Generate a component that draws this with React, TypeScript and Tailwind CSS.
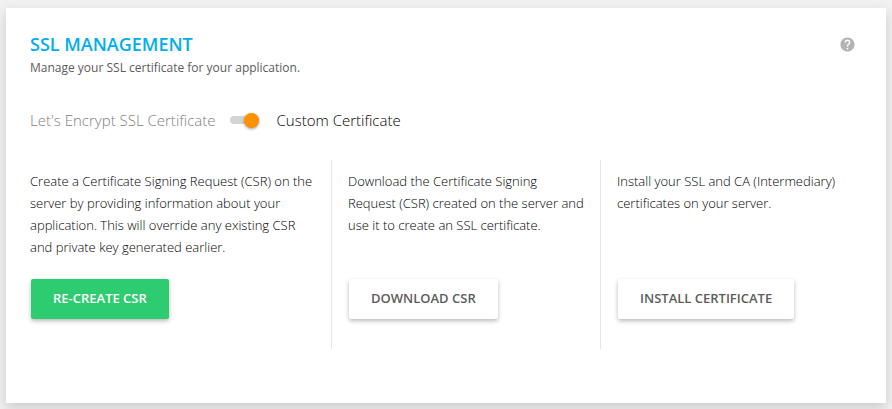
import React, { useState } from "react";
import { MdHelp } from "react-icons/md";
import clsx from "clsx";

type ActionColumnProps = {
    description: string;
    action: string;
    primary?: boolean;
    className?: string;
};

const ActionColumn = ({
    description,
    action,
    primary = false,
    className,
}: ActionColumnProps) => (
    <div className={clsx("flex flex-col items-start pt-2.5 pb-7.5", className)}>
        <p className="grow min-h-[109px] text-[13px] leading-[22px] font-light text-black">
            {description}
        </p>
        <button
            type="button"
            className={clsx(
                "ml-px h-10 px-[22px] rounded-xs text-[13px] font-semibold whitespace-nowrap shadow-[0_2px_4px_rgba(0,0,0,0.28)]",
                primary ? "bg-[#2ecc71] text-white" : "bg-white text-[#5c5c5c]"
            )}
        >
            {action}
        </button>
    </div>
);

const App = () => {
    const [isCustom, setIsCustom] = useState(true);

    return (
        <div className="min-h-screen bg-[#f1f1f1] px-1.5 pt-2 pb-1.5 font-['Open_Sans',sans-serif]">
            <main className="bg-white px-6 pt-6 pb-[54px] shadow-[0_5px_12px_rgba(0,0,0,0.16)]">
                <header className="flex justify-between items-start">
                    <div>
                        <h1 className="text-lg leading-6 font-semibold text-[#00aeef]">
                            SSL MANAGEMENT
                        </h1>
                        <p className="text-xs leading-6 text-[#5c5c5c]">
                            Manage your SSL certificate for your application.
                        </p>
                    </div>
                    <button
                        type="button"
                        aria-label="Help"
                        className="mt-1 mr-1.5 text-[#b3b3b3]"
                    >
                        <MdHelp size={17} />
                    </button>
                </header>

                <div className="mt-7 flex items-center text-[15px] leading-6 font-light">
                    <span className="text-[#808080]">
                        Let's Encrypt SSL Certificate
                    </span>
                    <input
                        id="custom-certificate"
                        type="checkbox"
                        role="switch"
                        checked={isCustom}
                        onChange={(e) => setIsCustom(e.target.checked)}
                        className="ml-3.5 mr-[18px] flex h-2 w-[29px] appearance-none items-center rounded-full bg-[#d4d4d4] before:size-[15px] before:shrink-0 before:rounded-full before:bg-[#ff9100] before:shadow-[0_1px_3px_rgba(0,0,0,0.4)] checked:justify-end"
                    />
                    <label htmlFor="custom-certificate" className="text-black">
                        Custom Certificate
                    </label>
                </div>

                <div className="mt-7 grid grid-cols-[302fr_269fr_261fr]">
                    <ActionColumn
                        primary
                        description="Create a Certificate Signing Request (CSR) on the server by providing information about your application. This will override any existing CSR and private key generated earlier."
                        action="RE-CREATE CSR"
                        className="border-r border-[#e6e6e6] pr-3.5"
                    />
                    <ActionColumn
                        description="Download the Certificate Signing Request (CSR) created on the server and use it to create an SSL certificate."
                        action="DOWNLOAD CSR"
                        className="border-r border-[#e6e6e6] pl-4 pr-3.5"
                    />
                    <ActionColumn
                        description="Install your SSL and CA (Intermediary) certificates on your server."
                        action="INSTALL CERTIFICATE"
                        className="pl-4"
                    />
                </div>
            </main>
        </div>
    );
};

export default App;
